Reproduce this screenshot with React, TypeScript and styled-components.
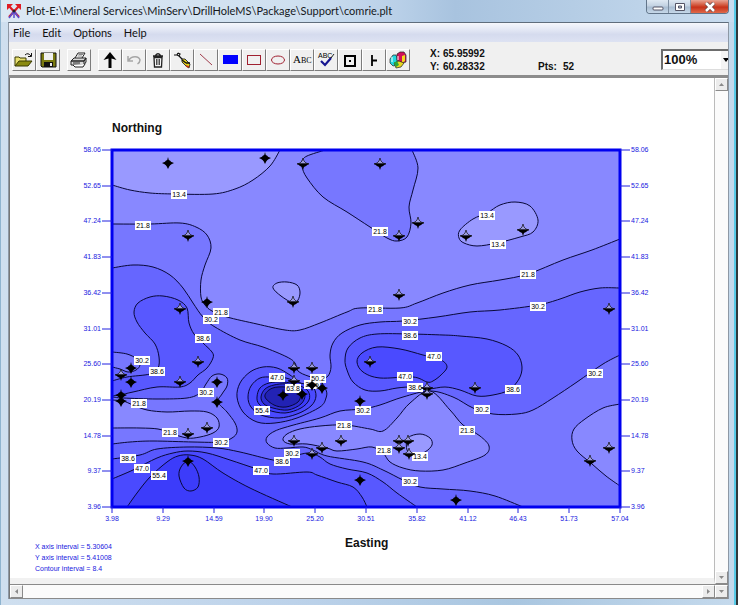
import React from "react";
import styled, { createGlobalStyle } from "styled-components";

const ui = `Lato, "Open Sans", sans-serif`;
const sans = `"Liberation Sans", Arial, sans-serif`;

const GlobalStyle = createGlobalStyle`
  *, *::before, *::after { box-sizing: border-box; }
  body { margin: 0; background: #30383c; }
  button, select { font: inherit; color: inherit; margin: 0; padding: 0; border-radius: 0; }
`;

/* ---------- window frame ---------- */

const Desktop = styled.div`
  min-height: 100vh;
  display: flex;
  padding-right: 2px;
  background: #30383c;
`;

const Window = styled.main`
  flex: 1;
  min-width: 0;
  display: flex;
  flex-direction: column;
  padding: 0 5px 6px 7px;
  border-right: 2px solid #57cbe8;
  border-left: 1px solid #8fb4cf;
  border-bottom: 1px solid #4bb6d6;
  background: linear-gradient(90deg, #cfdfef, #bcd2ea 40%, #a9c6e0 70%, #c4d9ec);
`;

const TitleBar = styled.header`
  display: flex;
  align-items: flex-start;
  height: 22px;
  margin: 0 -5px 0 -7px;
  padding: 0 5px 0 5px;
  background: linear-gradient(90deg, #dbe8f4 0%, #cfe0f0 40%, #b9d0e8 54%, #a8c3df 62%, #b5cde5 78%, #c9dcef 100%);
`;

const AppIcon = styled.svg`
  width: 16px;
  height: 16px;
  margin-top: 3px;
`;

const Title = styled.h1`
  flex: 1;
  margin: 0;
  padding-left: 4px;
  font: 11px/21px ${ui};
  color: #15181c;
  white-space: nowrap;
  overflow: hidden;
`;

const WindowButtons = styled.div`
  display: flex;
  height: 14px;
  border: 1px solid #62758a;
  border-top: 0;
  border-radius: 0 0 4px 4px;
  overflow: hidden;
`;

const WindowButton = styled.button<{ $danger?: boolean }>`
  width: ${(p) => (p.$danger ? 37 : 22)}px;
  border: 0;
  border-right: 1px solid #7d8ea1;
  display: grid;
  place-items: center;
  background: ${(p) =>
    p.$danger
      ? "linear-gradient(#e8a594, #cf4a2f 45%, #c7321a 55%, #e0694a)"
      : "linear-gradient(#dfe9f3, #c3d2e2 45%, #a9bdd2 55%, #c6d8e9)"};
  &:last-child { border-right: 0; }
`;

const Client = styled.div`
  flex: 1;
  display: flex;
  flex-direction: column;
  border-top: 1px solid #5f6d7c;
  border-left: 1px solid #8d98a5;
  border-right: 1px solid #8d98a5;
  background: #f0f0f0;
`;

const MenuBar = styled.nav`
  display: flex;
  height: 19px;
  padding-left: 4px;
  gap: 12px;
  background: linear-gradient(#f5f7fc, #e6eaf6 30%, #d5dbee 60%, #dde2f2);
`;

const MenuItem = styled.button`
  border: 0;
  background: none;
  font: 11px/18px ${ui};
  color: #111;
`;

/* ---------- tool bar ---------- */

const ToolBar = styled.div`
  display: flex;
  align-items: center;
  height: 36px;
  padding: 2px 0 0 3px;
  border-bottom: 3px solid #8c8c8c;
  background: #f0f0f0;
  overflow: hidden;
`;

const ToolGroup = styled.div`
  display: flex;
  margin-right: 7px;
`;

const ToolButton = styled.button`
  width: 24px;
  height: 22px;
  border: 1px solid;
  border-color: #fff #7c7c7c #7c7c7c #fff;
  background: #f0f0f0;
  display: grid;
  place-items: center;
  svg { width: 20px; height: 18px; display: block; }
`;

const Readout = styled.dl`
  display: grid;
  grid-template-columns: 13px 95px 25px auto;
  margin: 0 auto 0 13px;
  font: bold 10px/13px ${sans};
  color: #111;
  dt, dd { margin: 0; }
`;

const PointsTerm = styled.dt`
  grid-row: 2;
  grid-column: 3;
`;

const ZoomBox = styled.label`
  display: flex;
  align-items: stretch;
  height: 21px;
  width: 67px;
  border: 2px solid #6d6d6d;
  border-right: 0;
  border-bottom: 1px solid #ddd;
  background: #fff;
`;

const ZoomSelect = styled.select`
  appearance: none;
  flex: 1;
  min-width: 0;
  border: 0;
  background: transparent;
  font: bold 13px/18px ${sans};
  color: #111;
  padding-left: 1px;
`;

const Caret = styled.svg`
  width: 7px;
  height: 18px;
  background: #f4f4f4;
  pointer-events: none;
`;

/* ---------- drawing area ---------- */

const Work = styled.div`
  flex: 1;
  display: grid;
  grid-template-columns: 1fr 13px;
  grid-template-rows: 1fr 14px;
  border-left: 1px solid #777;
  border-bottom: 1px solid #8a8a8a;
`;

const Sheet = styled.section`
  background: #fff;
  border-bottom: 6px solid #f1f1f1;
  border-right: 1px solid #bbb;
  overflow: hidden;
`;

const Plot = styled.svg`
  display: block;
  width: 100%;
  height: auto;
  font-family: ${sans};
`;

const TickText = styled.text`
  font-size: 7px;
  fill: #2020e0;
`;

const LevelText = styled.text`
  font-size: 7px;
  fill: #000;
  text-anchor: middle;
`;

const AxisTitle = styled.text`
  font-size: 12px;
  font-weight: bold;
  fill: #111;
`;

const ScrollBar = styled.div<{ $row?: boolean }>`
  display: flex;
  flex-direction: ${(p) => (p.$row ? "row" : "column")};
  justify-content: space-between;
  background: #fbfbfb;
  border-top: ${(p) => (p.$row ? "1px solid #8a8a8a" : "0")};
`;

const ScrollButton = styled.button`
  width: 13px;
  height: 13px;
  border: 1px solid;
  border-color: #fff #8a8a8a #8a8a8a #fff;
  background: #ececec;
  display: grid;
  place-items: center;
  svg { width: 5px; height: 5px; fill: #8a8a8a; display: block; }
`;

/* ---------- chart data ---------- */

type Pt = [number, number];

const pts = (s: string): Pt[] =>
  s.trim().split(/\s+/).map((p) => p.split(",").map(Number) as Pt);

/* Smooth curve through every point (Catmull-Rom turned into cubic Béziers). */
function curve(list: Pt[], closed: boolean) {
  const n = list.length;
  const at = (i: number) =>
    closed ? list[(i + n) % n] : list[Math.max(0, Math.min(n - 1, i))];
  let d = `M${list[0]}`;
  for (let i = 0; i < (closed ? n : n - 1); i++) {
    const [a, b, c, e] = [at(i - 1), at(i), at(i + 1), at(i + 2)];
    const c1 = [b[0] + (c[0] - a[0]) / 6, b[1] + (c[1] - a[1]) / 6];
    const c2 = [c[0] - (e[0] - b[0]) / 6, c[1] - (e[1] - b[1]) / 6];
    d += `C${c1.map((v) => v.toFixed(1))} ${c2.map((v) => v.toFixed(1))} ${c}`;
  }
  return closed ? d + "Z" : d;
}

const shade = {
  a: "#9999ff",
  b: "#8888ff",
  c: "#7777ff",
  d: "#6666ff",
  e: "#5858ff",
  f: "#4a4aff",
  g: "#3c3cfa",
  h: "#2e2ed4",
  i: "#2222b4",
};

interface Contour {
  line: string;
  fill?: string;
  close?: string; /* path continuing along the frame, so that the fill is bounded */
  loop?: boolean;
}

const contours: Contour[] = [
  { line: "112,185 130,190 150,193 175,194 213,194 235,189 253,180 270,166 280,150", fill: shade.a, close: "L112,150Z" },
  {
    line: "112,224 150,224 180,223 196,227 207,235 211,248 205,265 201,280 201,297 205,305 212,311 227,317 257,324 285,330 300,330 320,323 347,312 360,308 400,308 417,303 443,293 470,285 500,280 528,274 563,260 592,250 620,239",
    fill: shade.c, close: "L620,507L112,507Z",
  },
  { line: "325,150 307,156 302,161 302,167 307,178 323,197 347,212 370,227 387,238 397,241 407,237 411,223 409,207 413,190 418,168 412,150", fill: shade.c, close: "Z" },
  { line: "460,230 473,219 487,213 500,205 515,202 530,206 538,220 533,232 520,237 497,243 477,246 464,243 459,238", fill: shade.a, loop: true },
  { line: "273,288 277,283 287,282 297,285 300,292 298,300 293,303 281,296", fill: shade.a, loop: true },
  {
    line: "112,268 133,265 153,267 170,275 183,288 193,303 203,317 215,327 240,340 263,347 287,357 295,363 298,371 308,376 320,379 328,376 331,367 330,355 333,343 342,333 360,325 380,322 403,321 437,317 470,312 500,310 538,305 560,299 580,292 600,288 620,288",
    fill: shade.d, close: "L620,507L112,507Z",
  },
  { line: "112,381 127,377 150,374 158,368 159,357 155,344 145,333 137,322 134,312 138,303 150,297 163,296 178,300 187,308 189,323 194,334 203,343 212,352 213,358 207,368 198,375 190,383 180,387 157,387 133,392 120,395 112,396", fill: shade.e, close: "Z" },
  { line: "112,352 127,354 137,359 140,365 136,370 128,372 120,369 112,367", fill: shade.c, close: "Z" },
  {
    line: "112,397 123,398 157,399 187,398 200,393 206,384 212,376 220,374 227,378 227,386 222,394 218,402 227,412 235,423 237,432 232,438 220,442 193,442 153,441 130,442 112,444",
    fill: shade.c, close: "Z",
  },
  { line: "112,400 123,401 133,405 147,410 167,412 190,411 207,412 217,418 219,427 213,433 200,437 187,438 170,433 158,429 140,428 112,428", fill: shade.b, close: "Z" },
  {
    line: "620,355 603,364 577,382 553,398 533,410 517,414 493,414 473,408 453,397 430,391 403,397 380,405 363,409 340,411 320,418 290,426 275,431 267,437 267,443 275,448 287,448 303,447 313,450 327,456 363,462 383,470 403,480 420,487 443,489 470,491 495,496 523,507",
    fill: shade.c, close: "L620,507Z",
  },
  { line: "430,391 410,403 397,418 383,431 370,429 345,425 320,426 300,429 287,434 283,440 290,444 307,444 327,448 337,451 357,449 372,447 383,453 390,462 403,468 420,471 443,470 465,463 485,455 489,446 480,436 463,425 450,410", fill: shade.b, loop: true },
  { line: "620,404 603,408 585,419 574,429 572,440 577,451 592,464 606,476 620,486", fill: shade.b, close: "Z" },
  { line: "408,438 420,434 430,438 432,445 425,452 414,455 407,450", fill: shade.a, loop: true },
  { line: "460,336 487,339 507,346 518,355 522,367 519,379 509,390 493,395 477,396 460,390 445,387 428,389 413,387 397,388 380,391 365,390 353,382 347,370 345,360 348,348 360,338 377,334 410,334 443,335", fill: shade.e, loop: true },
  { line: "357,362 362,353 377,347 400,349 423,355 441,360 447,367 441,375 433,381 427,382 413,377 380,378 363,372", fill: shade.f, loop: true },
  { line: "112,459 140,455 157,449 187,447 217,448 240,452 273,460 285,460 298,455 310,453 320,457 330,464 347,469 367,473 383,482 397,493 417,507", fill: shade.e, close: "L112,507Z" },
  { line: "112,479 133,470 157,458 173,453 188,451 207,453 230,460 257,469 273,474 307,472 317,475 337,482 353,487 362,497 367,507", fill: shade.f, close: "L112,507Z" },
  { line: "127,507 137,493 150,477 167,462 178,456 190,455 203,459 223,473 250,488 292,507", fill: shade.g, close: "Z" },
  { line: "188,461 181,467 179,476 184,488 191,491 198,487 199,477 195,467", fill: shade.g, loop: true },
  { line: "237,397 240,383 250,372 263,367 277,368 290,375 303,384 318,380 326,390 326,398 320,407 297,418 275,423 257,422 243,412", fill: shade.e, loop: true },
  { line: "248,397 251,386 260,378 272,377 286,378 300,383 312,386 316,396 311,406 297,414 279,418 261,415 251,407", fill: shade.f, loop: true },
  { line: "257,397 260,388 269,383 283,382 298,385 308,391 309,400 301,408 285,413 268,410 259,404", fill: shade.g, loop: true },
  { line: "261,397 265,389 274,385 286,384 299,388 305,395 301,404 288,410 273,408 264,404", fill: shade.h, loop: true },
  { line: "265,397 269,390 278,387 291,388 300,394 298,402 286,407 274,405", fill: shade.i, loop: true },
];

const levels: [number, number, string][] = [
  [179, 194, "13.4"], [143, 225, "21.8"], [380, 231, "21.8"], [487, 215, "13.4"], [498, 244, "13.4"],
  [528, 274, "21.8"], [538, 306, "30.2"], [375, 309, "21.8"], [410, 321, "30.2"], [410, 335, "38.6"],
  [434, 356, "47.0"], [405, 376, "47.0"], [415, 387, "38.6"], [513, 389, "38.6"], [595, 373, "30.2"],
  [482, 409, "30.2"], [467, 430, "21.8"], [363, 410, "30.2"], [344, 425, "21.8"], [384, 450, "21.8"],
  [420, 456, "13.4"], [410, 481, "30.2"], [221, 312, "21.8"], [211, 319, "30.2"], [203, 338, "38.6"],
  [142, 360, "30.2"], [157, 371, "38.6"], [206, 392, "30.2"], [139, 403, "21.8"], [170, 432, "21.8"],
  [221, 442, "30.2"], [128, 458, "38.6"], [142, 468, "47.0"], [159, 475, "55.4"], [262, 410, "55.4"],
  [277, 377, "47.0"], [312, 384, "38.6"], [318, 378, "50.2"], [293, 388, "63.8"], [261, 470, "47.0"],
  [282, 461, "38.6"], [292, 453, "30.2"],
];

const solidHoles = pts(`168,163 265,158 207,302 131,368 131,382 121,395 121,401 217,382 217,402 188,461
  283,395 302,394 360,401 360,480 456,500 312,385 322,388`);

const openHoles = pts(`303,164 380,164 188,236 418,223 399,236 466,236 523,230 293,302 399,295 609,309
  180,309 121,375 180,382 198,362 188,434 207,428 370,362 294,368 312,368 294,381 427,388 427,394 475,388
  294,441 341,441 322,448 312,454 399,441 408,441 399,448 409,454 609,448 590,461`);

const northings = ["58.06", "52.65", "47.24", "41.83", "36.42", "31.01", "25.60", "20.19", "14.78", "9.37", "3.96"];
const eastings = ["3.98", "9.29", "14.59", "19.90", "25.20", "30.51", "35.82", "41.12", "46.43", "51.73", "57.04"];
const notes = ["X axis interval =  5.30604", "Y axis interval =  5.41008", "Contour interval =  8.4"];

function Hole({ x, y, open }: { x: number; y: number; open?: boolean }) {
  return (
    <g transform={`translate(${x} ${y})`}>
      {open ? (
        <>
          <path d="M-6 0L-3-1L-1-3L0-6L1-3L3-1L6 0Z" fill="#9c9ce0" stroke="#111" strokeWidth=".7" />
          <path d="M-6-.500H6L3 2L1 3L0 6L-1 3L-3 2Z" fill="#000" />
        </>
      ) : (
        <>
          <path d="M0-6L1-2L6 0L2 2L0 6L-2 2L-6 0L-1-2Z" fill="#000" />
          <circle r="3" fill="#000" />
        </>
      )}
    </g>
  );
}

function ContourPlot() {
  return (
    <Plot viewBox="10 78 704 500" role="img" aria-label="Contour plot of drill holes">
      <AxisTitle x="112" y="132">Northing</AxisTitle>
      <rect x="112" y="150" width="508" height="357" fill={shade.b} />
      {contours.map((c, i) => {
        const d = curve(pts(c.line), !!c.loop);
        return (
          <g key={i}>
            <path d={d + (c.close ?? "")} fill={c.fill} />
            <path d={d} fill="none" stroke="#080838" strokeWidth="1" />
          </g>
        );
      })}
      <rect x="112" y="150" width="508" height="357" fill="none" stroke="#0000f0" strokeWidth="3" />
      {levels.map(([x, y, t], i) => (
        <g key={i}>
          <rect x={x - 8} y={y - 4} width="16" height="9" fill="#fff" />
          <LevelText x={x} y={y + 3}>{t}</LevelText>
        </g>
      ))}
      {solidHoles.map(([x, y], i) => <Hole key={i} x={x} y={y} />)}
      {openHoles.map(([x, y], i) => <Hole key={i} x={x} y={y} open />)}
      {northings.map((t, i) => {
        const y = 150 + Math.round(i * 35.7);
        return (
          <g key={t}>
            <path d={`M102 ${y}H112M620 ${y}H630`} stroke="#2020e0" />
            <TickText x="101" y={y + 2} textAnchor="end">{t}</TickText>
            <TickText x="631" y={y + 2}>{t}</TickText>
          </g>
        );
      })}
      {eastings.map((t, i) => {
        const x = 112 + Math.round(i * 50.8);
        return (
          <g key={t}>
            <path d={`M${x} 507V513`} stroke="#2020e0" />
            <TickText x={x} y="521" textAnchor="middle">{t}</TickText>
          </g>
        );
      })}
      <AxisTitle x="345" y="547">Easting</AxisTitle>
      {notes.map((t, i) => <TickText key={t} x="35" y={549 + i * 11}>{t}</TickText>)}
    </Plot>
  );
}

/* ---------- tool icons, each on a 20 x 18 grid ---------- */

const icons: Record<string, React.ReactNode> = {
  Open: (
    <>
      <path d="M1 15V6h4l1 1h6v3" fill="#e8e070" stroke="#3a3a00" />
      <path d="M1 15L5 10H18L14 15Z" fill="#8a8a10" stroke="#3a3a00" />
      <path d="M11 4Q14 1 17 5M17.500 2V5.500H14" fill="none" stroke="#111" />
    </>
  ),
  Save: (
    <>
      <path d="M3 2H18V16H4L3 15Z" fill="#7a7a10" stroke="#111" />
      <rect x="6" y="2" width="9" height="7" fill="#f0f0f0" />
      <rect x="6" y="11" width="9" height="5" fill="#111" />
      <rect x="12" y="12" width="2" height="3" fill="#eee" />
    </>
  ),
  Print: (
    <>
      <path d="M6 7L9 2H16L13 7" fill="#fff" stroke="#222" />
      <path d="M8.500 5H13M9.500 3.500H14" stroke="#555" strokeWidth=".7" />
      <path d="M2 10L5 7H17L15 10ZM2 10H15V14H2ZM15 10L17 7V11L15 14" fill="#d8d8d8" stroke="#222" />
      <path d="M4 14L6 16H14L16 13" fill="#fff" stroke="#222" />
      <path d="M4 12H11" stroke="#222" />
    </>
  ),
  Select: <path d="M10 1L16.500 9L11.500 7.500V17H8.500V7.500L3.500 9Z" fill="#000" />,
  Undo: <path d="M4 5V10H9M4.500 9.500C8 4 15 5 16 9C16 11 15 12 13.500 13" fill="none" stroke="#a6a6a6" strokeWidth="1.500" />,
  Delete: (
    <>
      <path d="M5 5H15M7.500 4.500Q10 1 12.500 4.500M6 6.500L6.500 16H13.500L14 6.500Z" fill="#f4f4f4" stroke="#222" strokeWidth="1.300" />
      <path d="M8.500 8V14M10 8V14M11.500 8V14" stroke="#222" strokeWidth=".8" />
    </>
  ),
  Draw: (
    <>
      <path d="M2 4H5M6 2L8 3L7 5L5 4L6 2M7 5L11 9" fill="none" stroke="#111" strokeWidth="1.200" />
      <path d="M10 8L13 8L18 13L17 17L14 15L10 11Z" fill="#e6d21c" stroke="#222" strokeWidth=".9" />
      <path d="M10 9L14 12M14 12L18 12" stroke="#111" strokeWidth="1.300" />
      <path d="M14 15L17 16" stroke="#c03010" strokeWidth="1.500" />
    </>
  ),
  Line: <path d="M4 3L16 14" stroke="#a03c4c" />,
  Fill: <rect x="3" y="4" width="15" height="9" fill="#0000ff" />,
  Rectangle: <rect x="3.500" y="4.500" width="13" height="9" fill="none" stroke="#a02030" />,
  Ellipse: <ellipse cx="10" cy="9" rx="6.500" ry="4" fill="none" stroke="#a02030" />,
  Text: (
    <text x="1" y="12" fontFamily="Liberation Serif, serif" fontSize="11">
      A<tspan fontSize="8">BC</tspan>
    </text>
  ),
  Spelling: (
    <>
      <text x="2" y="7" fontFamily="Liberation Sans, sans-serif" fontSize="7">ABC</text>
      <path d="M5 10L9 14L15 7" fill="none" stroke="#151590" strokeWidth="2.200" />
      <path d="M15 7L18 3" stroke="#222" />
    </>
  ),
  Point: (
    <>
      <rect x="5" y="5" width="10" height="10" fill="none" stroke="#000" strokeWidth="2" />
      <rect x="9" y="9" width="2" height="2" />
    </>
  ),
  Tick: <path d="M8 4V15M8 9.500H13" stroke="#000" strokeWidth="1.800" />,
  Colours: (
    <>
      <path d="M2 8L5 4L8 4L9 7V14L5 15L2 12Z" fill="#22d8e0" stroke="#222" strokeWidth=".7" />
      <path d="M9 3L12 1H16L18 4V11L14 12L9 9Z" fill="#d01058" stroke="#222" strokeWidth=".7" />
      <path d="M14 5L17 4V10L14 12Z" fill="#f4d81c" />
      <path d="M6 12L11 10L16 12L13 16L8 17Z" fill="#e8d820" stroke="#222" strokeWidth=".7" />
      <path d="M6 12L9 10L11 14L8 16Z" fill="#28a838" />
      <path d="M4 6V11M10 5V9" stroke="#fff" />
    </>
  ),
};

const toolGroups = [
  ["Open", "Save"],
  ["Print"],
  ["Select", "Undo", "Delete", "Draw", "Line", "Fill", "Rectangle", "Ellipse", "Text", "Spelling", "Point", "Tick", "Colours"],
];

const arrows = {
  up: "M0 4L2.500 1L5 4Z",
  down: "M0 1L2.500 4L5 1Z",
  left: "M4 0L1 2.500L4 5Z",
  right: "M1 0L4 2.500L1 5Z",
};

function Scroll({ to }: { to: keyof typeof arrows }) {
  return (
    <ScrollButton aria-label={`Scroll ${to}`}>
      <svg viewBox="0 0 5 5"><path d={arrows[to]} /></svg>
    </ScrollButton>
  );
}

export default function App() {
  return (
    <Desktop>
      <GlobalStyle />
      <Window>
        <TitleBar>
          <AppIcon viewBox="0 0 16 16" aria-hidden="true">
            <path d="M3 3L13 14M13 3L3 14" stroke="#e01c24" strokeWidth="2.200" />
            <path d="M1 1H7L1 7ZM15 1H9L15 7Z" fill="#e01c24" />
            <path d="M8 8L3 15M8 8L13 15M8 8V15" stroke="#5a50d0" strokeWidth="1.500" />
            <circle cx="8" cy="8" r="1.500" fill="#222" />
          </AppIcon>
          <Title>Plot-E:\Mineral Services\MinServ\DrillHoleMS\Package\Support\comrie.plt</Title>
          <WindowButtons>
            <WindowButton aria-label="Minimize">
              <svg width="12" height="10"><rect x="1" y="5" width="10" height="3" rx="1" fill="#fff" stroke="#556" /></svg>
            </WindowButton>
            <WindowButton aria-label="Maximize">
              <svg width="12" height="10"><path d="M1.500 1.500H10.500V8.500H1.500ZM4.500 4H7.500V6H4.500Z" fill="#fff" fillRule="evenodd" stroke="#556" /></svg>
            </WindowButton>
            <WindowButton $danger aria-label="Close">
              <svg width="12" height="10">
                <path d="M2 1L10 9M10 1L2 9" stroke="#644" strokeWidth="4" />
                <path d="M2 1L10 9M10 1L2 9" stroke="#fff" strokeWidth="2.500" />
              </svg>
            </WindowButton>
          </WindowButtons>
        </TitleBar>
        <Client>
          <MenuBar>
            {["File", "Edit", "Options", "Help"].map((m) => <MenuItem key={m}>{m}</MenuItem>)}
          </MenuBar>
          <ToolBar>
            {toolGroups.map((group) => (
              <ToolGroup key={group[0]}>
                {group.map((name) => (
                  <ToolButton key={name} aria-label={name}>
                    <svg viewBox="0 0 20 18">{icons[name]}</svg>
                  </ToolButton>
                ))}
              </ToolGroup>
            ))}
            <Readout>
              <dt>X:</dt>
              <dd>65.95992</dd>
              <dt />
              <dd />
              <dt>Y:</dt>
              <dd>60.28332</dd>
              <PointsTerm>Pts:</PointsTerm>
              <dd>52</dd>
            </Readout>
            <ZoomBox>
              <ZoomSelect aria-label="Zoom" defaultValue="100%">
                <option>50%</option>
                <option>100%</option>
                <option>200%</option>
              </ZoomSelect>
              <Caret viewBox="0 0 7 18"><path d="M2 7H8L5 11Z" /></Caret>
            </ZoomBox>
          </ToolBar>
          <Work>
            <Sheet><ContourPlot /></Sheet>
            <ScrollBar><Scroll to="up" /><Scroll to="down" /></ScrollBar>
            <ScrollBar $row><Scroll to="left" /><Scroll to="right" /></ScrollBar>
            <ScrollBar $row><Scroll to="down" /></ScrollBar>
          </Work>
        </Client>
      </Window>
    </Desktop>
  );
}
